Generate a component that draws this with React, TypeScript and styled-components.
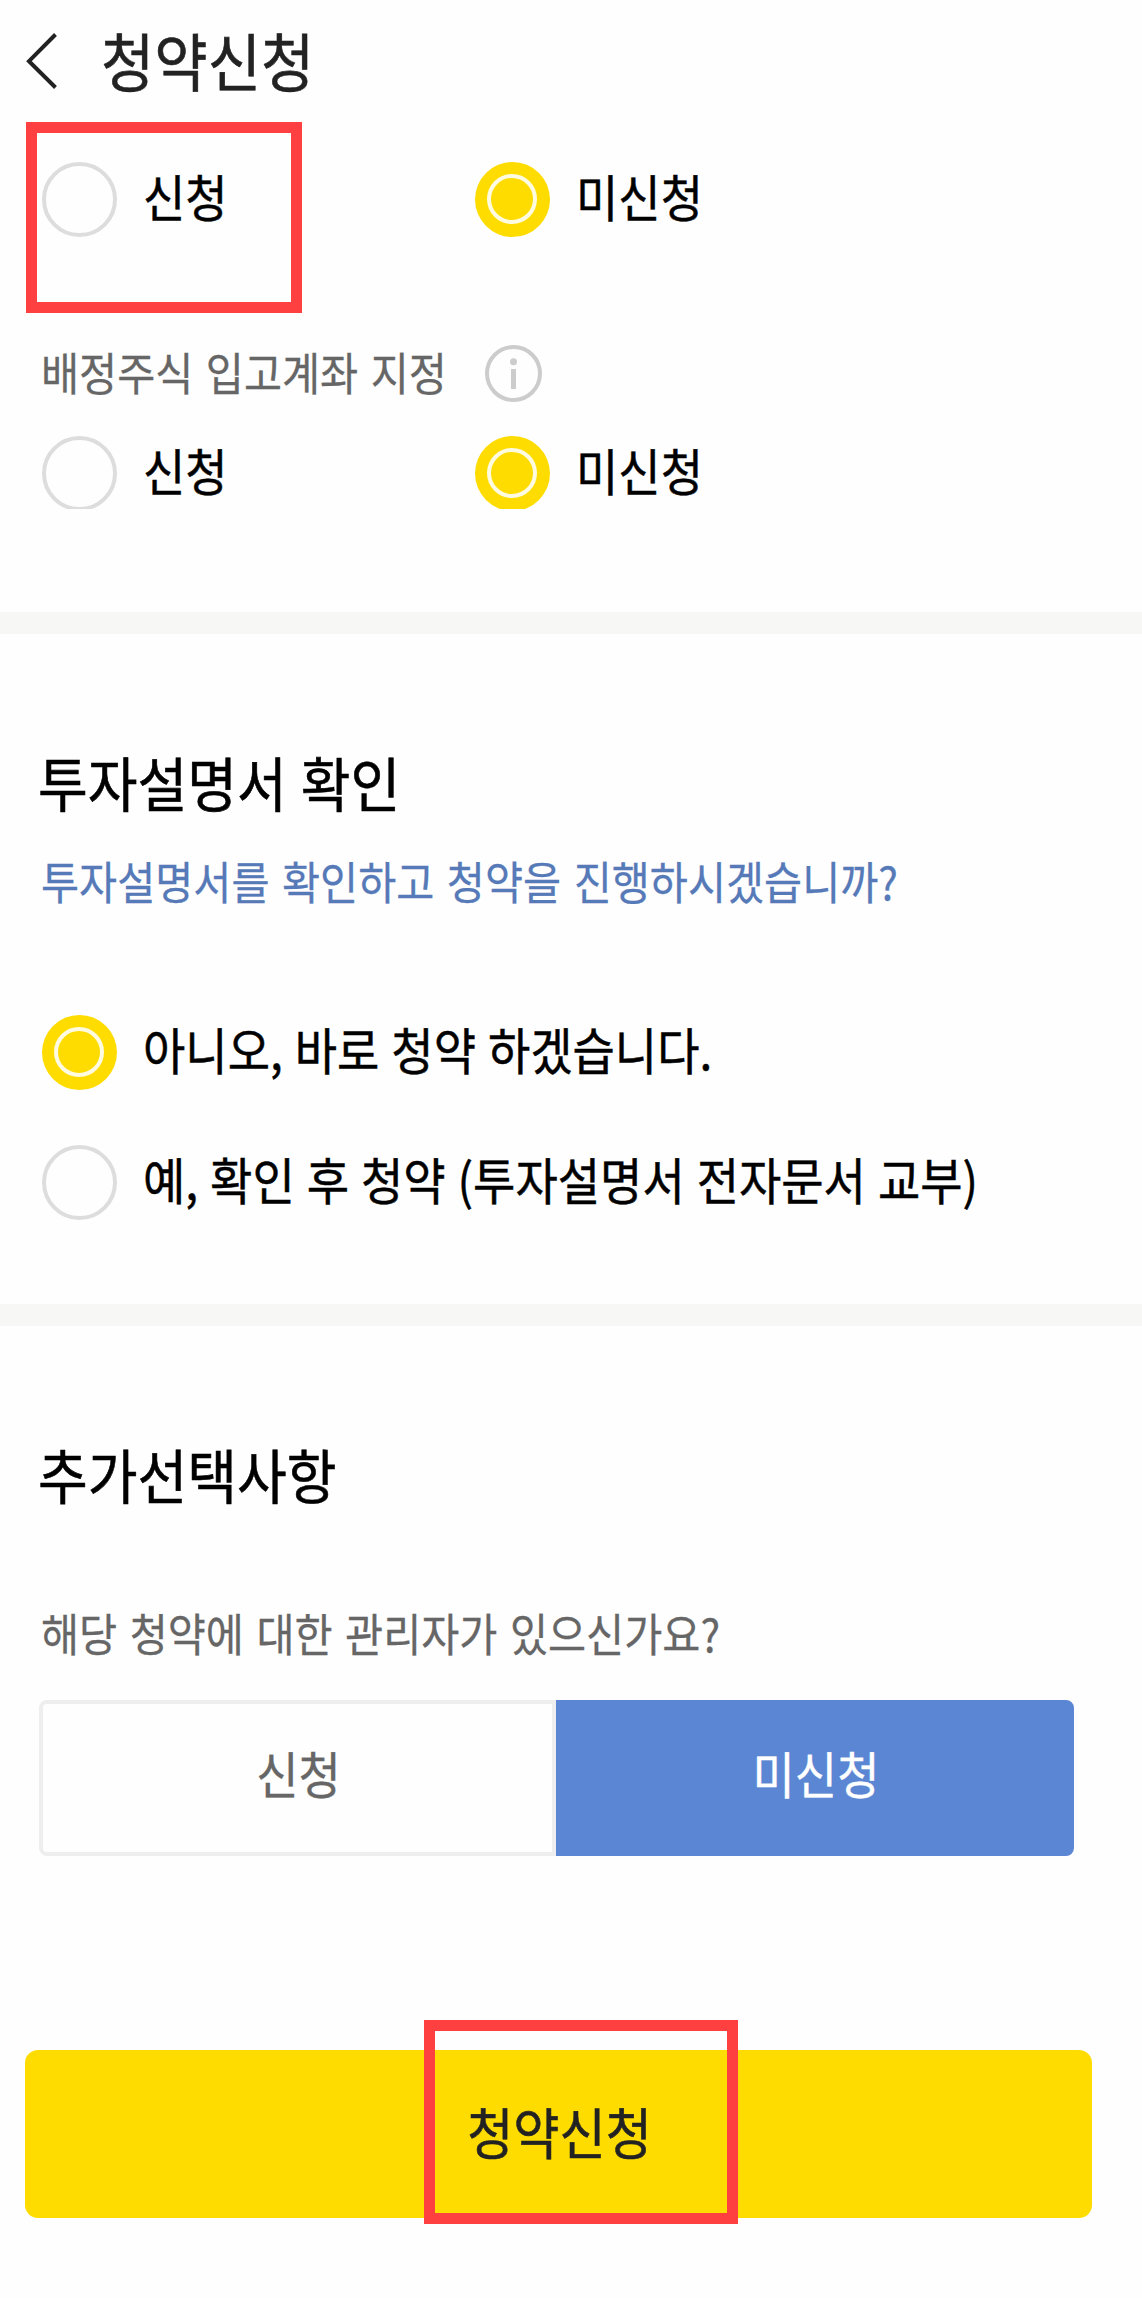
import React, { useState } from "react";
import styled, { createGlobalStyle, css } from "styled-components";

const GlobalStyle = createGlobalStyle`
  *, *::before, *::after { box-sizing: border-box; }
  body {
    margin: 0;
    background: #fefefe;
    font-family: "Noto Sans CJK KR", "Noto Sans", sans-serif;
    color: #000;
  }
  button { font: inherit; border: 0; padding: 0; background: none; color: inherit; }
  h1, h2, p { margin: 0; font-weight: 400; white-space: nowrap; }
`;

/* Slightly condensed Hangul, as in the app's own typeface. */
const condensed = css<{ $center?: boolean }>`
  display: block;
  white-space: nowrap;
  transform: scaleX(0.92);
  transform-origin: ${(p) => (p.$center ? "50%" : "0")} 50%;
`;

const Screen = styled.main`
  display: flex;
  flex-direction: column;
  width: 1142px;
  height: 2298px;
  overflow: hidden;
`;

const Header = styled.header`
  display: flex;
  flex: none;
  align-items: center;
  height: 122px;
  padding-left: 26px;
`;

const BackIcon = styled.svg`
  display: block;
  width: 34px;
  height: 60px;
`;

const Title = styled.h1`
  ${condensed}
  margin: 0 0 5px 41px;
  font-size: 63px;
  line-height: 80px;
  color: #222;
  -webkit-text-stroke: 0.6px #222;
`;

const Panel = styled.section<{ $height: number; $top: number }>`
  display: flex;
  flex: none;
  flex-direction: column;
  height: ${(p) => p.$height}px;
  padding: ${(p) => p.$top}px 68px 0 39px;
`;

const Divider = styled.div`
  flex: none;
  height: 22px;
  background: #f7f7f6;
`;

const OptionRow = styled.div`
  position: relative;
  flex: none;
  display: grid;
  grid-template-columns: 433px 1fr;
  height: 75px;
  padding-left: 3px;
`;

const OptionList = styled.div`
  display: flex;
  flex-direction: column;
  gap: 55px;
  margin-top: 104px;
  padding-left: 3px;
`;

const OptionButton = styled.button`
  display: flex;
  align-items: flex-start;
  height: 75px;
  text-align: left;
`;

const Dot = styled.span<{ $on: boolean; $clipped?: boolean }>`
  flex: none;
  display: grid;
  place-items: center;
  width: 75px;
  height: 75px;
  padding: 0 1px 1px 0;
  border-radius: 50%;
  border: ${(p) => (p.$on ? "0" : "4px solid #ddd")};
  background: ${(p) => (p.$on ? "#ffdc00" : "transparent")};
  clip-path: ${(p) => (p.$clipped ? "inset(0 0 2px 0)" : "none")};

  &::after {
    content: "";
    display: ${(p) => (p.$on ? "block" : "none")};
    width: 50px;
    height: 50px;
    border: 4px solid #fffbe0;
    border-radius: 50%;
  }
`;

const OptionLabel = styled.span`
  ${condensed}
  margin-left: 25.5px;
  font-size: 50px;
  line-height: 66px;
  word-spacing: 1.8px;
  -webkit-text-stroke: 0.5px #000;
`;

const FieldTitle = styled.div`
  display: grid;
  grid-template-columns: 446px 57px;
  grid-template-rows: 57px;
  align-items: center;
  margin: 108px 0 34px;
`;

const Caption = styled.p<{ $color: string; $gap?: number; $lift?: number }>`
  ${condensed}
  margin: ${(p) => p.$gap ?? 0}px 0 ${(p) => p.$lift ?? 0}px 2.3px;
  font-size: 45px;
  line-height: 60px;
  word-spacing: 3.5px;
  color: ${(p) => p.$color};
  -webkit-text-stroke: 0.3px ${(p) => p.$color};
`;

const InfoIcon = styled.svg`
  display: block;
  width: 57px;
  height: 57px;
`;

const SectionTitle = styled.h2`
  ${condensed}
  margin-left: -1px;
  font-size: 58.8px;
  line-height: 80px;
  word-spacing: 2px;
  -webkit-text-stroke: 0.6px #000;
`;

const Segments = styled.div`
  display: grid;
  grid-template-columns: 517px 518px;
  height: 156px;
  margin-top: 37px;
`;

const Segment = styled.button<{ $on: boolean }>`
  padding: 0 0 12px 2px;
  border: 4px solid ${(p) => (p.$on ? "#5b86d3" : "#eee")};
  border-radius: ${(p) => (p.$on ? "0 8px 8px 0" : "8px 0 0 8px")};
  background: ${(p) => (p.$on ? "#5b86d3" : "transparent")};
  color: ${(p) => (p.$on ? "#fff" : "#666")};
  font-size: 50px;
  line-height: 70px;
  -webkit-text-stroke: 0.4px currentColor;
`;

const ButtonText = styled.span`
  ${condensed}
`;

const Footer = styled.footer`
  position: relative;
  flex: none;
  margin-top: 194px;
  padding: 0 50px 0 25px;
`;

const Submit = styled.button`
  display: block;
  width: 100%;
  height: 168px;
  padding: 0 0 7px 2px;
  border-radius: 13px;
  background: #ffdc00;
  color: #222;
  font-size: 54.5px;
  line-height: 80px;
  -webkit-text-stroke: 0.6px #222;
`;

const Highlight = styled.div<{ $x: number; $y: number; $w: number; $h: number }>`
  position: absolute;
  left: ${(p) => p.$x}px;
  top: ${(p) => p.$y}px;
  width: ${(p) => p.$w}px;
  height: ${(p) => p.$h}px;
  border: 11px solid #ff4040;
  pointer-events: none;
`;

type OptionProps = { label: string; on: boolean; clipped?: boolean; onPick: () => void };

function Option({ label, on, clipped, onPick }: OptionProps) {
  return (
    <OptionButton role="radio" aria-checked={on} onClick={onPick}>
      <Dot $on={on} $clipped={clipped} />
      <OptionLabel>{label}</OptionLabel>
    </OptionButton>
  );
}

const choices = ["신청", "미신청"];
const answers = ["아니오, 바로 청약 하겠습니다.", "예, 확인 후 청약 (투자설명서 전자문서 교부)"];

export default function App() {
  const [first, setFirst] = useState(1);
  const [account, setAccount] = useState(1);
  const [prospectus, setProspectus] = useState(0);
  const [manager, setManager] = useState(1);

  return (
    <>
      <GlobalStyle />
      <Screen>
        <Header>
          <BackIcon viewBox="0 0 34 60" fill="none" stroke="#222" strokeWidth="4">
            <path d="M29.5 3.5 3 30.2 29.5 56.5" />
          </BackIcon>
          <Title>청약신청</Title>
        </Header>

        <Panel $height={490} $top={40}>
          <OptionRow>
            {choices.map((c, i) => (
              <Option key={c} label={c} on={first === i} onPick={() => setFirst(i)} />
            ))}
            <Highlight $x={-13} $y={-40} $w={276} $h={191} />
          </OptionRow>
          <FieldTitle>
            <Caption $color="#666" $lift={4}>배정주식 입고계좌 지정</Caption>
            <InfoIcon viewBox="0 0 57 57">
              <circle cx="28.5" cy="28.5" r="26.5" fill="none" stroke="#ccc" strokeWidth="4" />
              <circle cx="28.5" cy="16.7" r="3.5" fill="#ccc" />
              <rect x="26" y="24" width="5" height="20" fill="#ccc" />
            </InfoIcon>
          </FieldTitle>
          <OptionRow>
            {choices.map((c, i) => (
              <Option key={c} label={c} on={account === i} clipped onPick={() => setAccount(i)} />
            ))}
          </OptionRow>
        </Panel>

        <Divider />

        <Panel $height={670} $top={108}>
          <SectionTitle>투자설명서 확인</SectionTitle>
          <Caption $color="#5679b8" $gap={29}>투자설명서를 확인하고 청약을 진행하시겠습니까?</Caption>
          <OptionList>
            {answers.map((a, i) => (
              <Option key={a} label={a} on={prospectus === i} onPick={() => setProspectus(i)} />
            ))}
          </OptionList>
        </Panel>

        <Divider />

        <Panel $height={530} $top={108}>
          <SectionTitle>추가선택사항</SectionTitle>
          <Caption $color="#666" $gap={89}>해당 청약에 대한 관리자가 있으신가요?</Caption>
          <Segments>
            {choices.map((c, i) => (
              <Segment key={c} $on={manager === i} onClick={() => setManager(i)}>
                <ButtonText $center>{c}</ButtonText>
              </Segment>
            ))}
          </Segments>
        </Panel>

        <Footer>
          <Submit>
            <ButtonText $center>청약신청</ButtonText>
          </Submit>
          <Highlight $x={424} $y={-30} $w={314} $h={204} />
        </Footer>
      </Screen>
    </>
  );
}
